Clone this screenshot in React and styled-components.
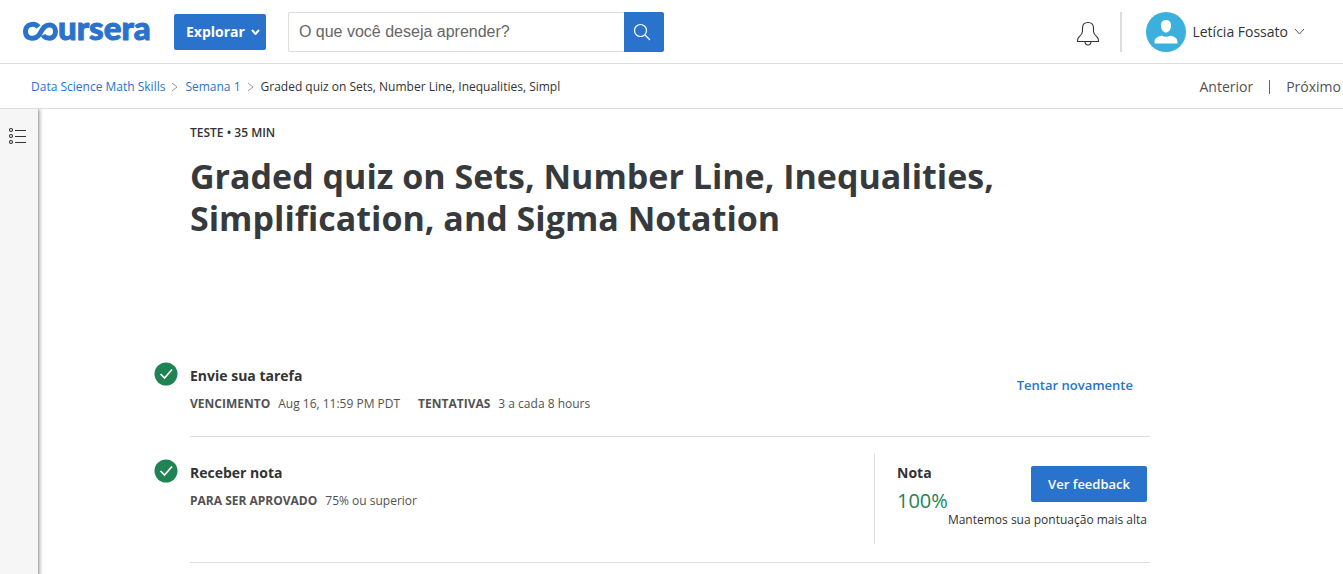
import React from "react";
import styled, { createGlobalStyle } from "styled-components";

const blue = "#2a73cc";
const line = "#dedede";

const GlobalStyle = createGlobalStyle`
  *, *::before, *::after { box-sizing: border-box; }
  html, body { margin: 0; height: 100%; }
  #root { min-height: 100%; display: flex; }
  body {
    background: #fff;
    color: #333;
    font-family: "Open Sans", Arial, sans-serif;
    font-size: 14px;
    line-height: 20px;
  }
  a { text-decoration: none; }
  button { font-family: inherit; cursor: pointer; }
`;

const Page = styled.div`
  flex: 1;
  min-width: 0;
  min-height: 100vh;
  display: flex;
  flex-direction: column;
`;

const Header = styled.header`
  height: 64px;
  display: flex;
  align-items: center;
  padding: 0 38px 0 22px;
  border-bottom: 1px solid ${line};
`;

const LogoLink = styled.a`
  display: flex;
  margin-right: 20px;
`;

const SolidButton = styled.button`
  height: 36px;
  display: flex;
  align-items: center;
  justify-content: center;
  gap: 6px;
  padding: 0 17px;
  border: 0;
  border-radius: 2px;
  background: ${blue};
  color: #fff;
  font-size: 13px;
  font-weight: 600;
  white-space: nowrap;
`;

const ExploreButton = styled(SolidButton)`
  padding: 0 6px 0 12px;
  font-size: 14px;
  font-weight: 700;
`;

const SearchForm = styled.form`
  display: flex;
  flex: 0 1 376px;
  margin-left: 22px;
`;

const SearchInput = styled.input`
  flex: 1;
  min-width: 0;
  height: 40px;
  padding: 0 10px;
  border: 1px solid ${line};
  border-right: 0;
  border-radius: 2px 0 0 2px;
  font-family: "Liberation Sans", Arial, sans-serif;
  font-size: 16px;
  color: #333;
  &::placeholder { color: #666; opacity: 1; }
`;

const SearchButton = styled.button`
  width: 40px;
  height: 40px;
  padding: 0 4px 0 0;
  display: flex;
  align-items: center;
  justify-content: center;
  border: 0;
  border-radius: 0 2px 2px 0;
  background: ${blue};
`;

const Account = styled.div`
  display: flex;
  align-items: center;
  margin-left: auto;
`;

const PlainButton = styled.button`
  display: flex;
  align-items: center;
  gap: 6px;
  padding: 0;
  border: 0;
  background: none;
  color: #333;
  font-size: 14px;
  white-space: nowrap;
`;

const Divider = styled.span`
  width: ${(p) => p.$w}px;
  height: ${(p) => p.$h}px;
  background: ${(p) => p.$color};
  margin: 0 ${(p) => p.$right}px 0 ${(p) => p.$left}px;
`;

const SubBar = styled.nav`
  height: 45px;
  display: flex;
  align-items: center;
  justify-content: space-between;
  padding: 2px 2px 0 31px;
  border-bottom: 1px solid ${line};
`;

const Crumbs = styled.ol`
  display: flex;
  align-items: center;
  gap: 7px;
  margin: 0;
  padding: 0;
  list-style: none;
  font-size: 12px;
  li { display: flex; align-items: center; gap: 6px; }
  a { color: ${blue}; }
`;

const Pager = styled.div`
  display: flex;
  align-items: center;
  a { color: #525252; }
`;

const Body = styled.div`
  flex: 1;
  display: flex;
`;

const Rail = styled.aside`
  width: 38px;
  padding: 18px 8px;
  background: #f6f6f6;
  box-shadow: 1px 0 4px rgba(0, 0, 0, 0.5);
  clip-path: inset(0 -6px 0 0);
`;

const Main = styled.main`
  flex: 1;
  max-width: 1112px;
  padding: 14px 0 0 152px;
`;

const Kicker = styled.p`
  margin: 0;
  font-size: 12px;
  font-weight: 600;
`;

const Title = styled.h1`
  max-width: 860px;
  margin: 12px 0 118px;
  font-size: 34px;
  line-height: 42px;
  font-weight: 700;
  color: #373a3c;
`;

const Step = styled.section`
  display: flex;
  justify-content: space-between;
  min-height: ${(p) => p.$h}px;
  padding-bottom: 18px;
  margin-bottom: 17px;
  border-bottom: 1px solid ${line};
`;

const StepInfo = styled.div`
  display: flex;
  gap: 12px;
  margin-left: -36px;
`;

const StepText = styled.div`
  padding-top: 9px;
`;

const StepTitle = styled.h2`
  margin: 0 0 8px;
  font-size: 14px;
  line-height: 20px;
  font-weight: 700;
`;

const Facts = styled.dl`
  display: flex;
  gap: 18px;
  margin: 0;
  font-size: 12px;
  color: #525252;
  div { display: flex; gap: 8px; }
  dt { font-weight: 700; }
  dd { margin: 0; }
`;

const StepIcon = styled.span`
  padding-top: 5px;
`;

const RetryLink = styled.a`
  margin: 18px 17px 0 0;
  font-size: 13px;
  font-weight: 600;
  color: ${blue};
`;

const GradePanel = styled.div`
  width: 276px;
  height: 90px;
  display: flex;
  flex-wrap: wrap;
  align-content: flex-start;
  justify-content: space-between;
  padding: 9px 3px 0 22px;
  border-left: 1px solid ${line};
`;

const Score = styled.p`
  margin: 0;
  font-size: 20px;
  line-height: 20px;
  color: #1f8354;
`;

const Feedback = styled.div`
  padding-top: 3px;
`;

const Note = styled.p`
  width: 100%;
  margin: 0;
  text-align: right;
  font-size: 12px;
  line-height: 18px;
`;

const Logo = () => (
  <svg width="132" height="48" viewBox="0 -10 132 48" role="img" aria-label="coursera">
    <path
      d="M16.500 9 C13 4.500 3.500 5.500 3.500 13.500 C3.500 21.500 13 22 17 17 C20 13 21 7 27.500 7 C35.500 7 35.500 20.200 27.500 20.200 C24 20.200 22 19 21 17"
      fill="none" stroke={blue} strokeWidth="5"
    />
    <text x="36" y="22" fill={blue} stroke={blue} strokeWidth="1" fontFamily="Lato, sans-serif" fontWeight="900" fontSize="33">ursera</text>
  </svg>
);

const Chevron = ({ w, h, color, stroke, right }) => (
  <svg width={w} height={h} viewBox={`0 0 ${w} ${h}`} aria-hidden="true">
    <path
      d={right ? `M1 1 L${w - 1} ${h / 2} L1 ${h - 1}` : `M1 1 L${w / 2} ${h - 1} L${w - 1} 1`}
      fill="none" stroke={color} strokeWidth={stroke}
    />
  </svg>
);

const SearchIcon = () => (
  <svg width="18" height="18" viewBox="0 0 18 18" fill="none" stroke="#fff" strokeWidth="1.200" aria-hidden="true">
    <circle cx="7.500" cy="7.500" r="6" />
    <path d="M12 12 L17 17" />
  </svg>
);

const Bell = () => (
  <svg width="24" height="28" viewBox="0 0 24 28" fill="none" stroke="#333" strokeWidth="1.100" aria-hidden="true">
    <path d="M12 4.500 C8.500 4.500 6.500 6.500 6.500 10 V13.500 C6.500 16 4.500 17.500 2.500 19.500 Q1.500 20.500 1.500 23.500 H22.500 Q22.500 20.500 21.500 19.500 C19.500 17.500 17.500 16 17.500 13.500 V10 C17.500 6.500 15.500 4.500 12 4.500 Z" />
    <path d="M9 23.500 C9 28.200 15 28.200 15 23.500" />
  </svg>
);

const Avatar = () => (
  <svg width="40" height="40" viewBox="0 0 40 40" aria-hidden="true">
    <circle cx="20" cy="20" r="20" fill="#3bb0dc" />
    <path d="M20 8 C23.500 8 25.500 10.500 25 14.500 C24.600 18 22.500 20.500 20 20.500 C17.500 20.500 15.400 18 15 14.500 C14.500 10.500 16.500 8 20 8 Z" fill="#fff" />
    <path d="M8.500 31.500 C8.500 26 10 25.500 15.500 23.500 Q20 26 24.500 23.500 C30 25.500 31.500 26 31.500 31.500 Z" fill="#fff" />
  </svg>
);

const ListIcon = () => (
  <svg width="18" height="18" viewBox="0 0 18 18" fill="none" stroke="#333" aria-hidden="true">
    {[3, 9, 15].map((y) => (
      <g key={y}>
        <circle cx="3" cy={y} r="1.500" strokeWidth="1.100" />
        <path d={`M7 ${y + 0.5} H18`} />
      </g>
    ))}
  </svg>
);

const Check = () => (
  <svg width="24" height="24" viewBox="0 0 24 24" role="img" aria-label="Concluído">
    <circle cx="12" cy="12" r="11.500" fill="#1f8354" />
    <path d="M6.500 12 L10.500 16 L18 7.500" fill="none" stroke="#fff" strokeWidth="1.700" />
  </svg>
);

const StepDetails = ({ title, facts }) => (
  <StepInfo>
    <StepIcon><Check /></StepIcon>
    <StepText>
      <StepTitle>{title}</StepTitle>
      <Facts>
        {facts.map(([name, value]) => (
          <div key={name}><dt>{name}</dt><dd>{value}</dd></div>
        ))}
      </Facts>
    </StepText>
  </StepInfo>
);

export default function App() {
  return (
    <Page>
      <GlobalStyle />
      <Header>
        <LogoLink href="#"><Logo /></LogoLink>
        <ExploreButton type="button">
          <span>Explorar</span>
          <Chevron w={9} h={6} color="#fff" stroke={2} />
        </ExploreButton>
        <SearchForm role="search">
          <SearchInput type="text" aria-label="Pesquisar" placeholder="O que você deseja aprender?" />
          <SearchButton type="button" aria-label="Buscar"><SearchIcon /></SearchButton>
        </SearchForm>
        <Account>
          <PlainButton type="button" aria-label="Notificações"><Bell /></PlainButton>
          <Divider $w={2} $h={40} $color={line} $left={20} $right={24} />
          <PlainButton type="button">
            <Avatar />
            <span>Letícia Fossato</span>
            <Chevron w={11} h={7} color="#555" stroke={1} />
          </PlainButton>
        </Account>
      </Header>
      <SubBar aria-label="Navegação do curso">
        <Crumbs>
          <li><a href="#">Data Science Math Skills</a><Chevron right w={7} h={10} color="#999" stroke={1} /></li>
          <li><a href="#">Semana 1</a><Chevron right w={7} h={10} color="#999" stroke={1} /></li>
          <li>Graded quiz on Sets, Number Line, Inequalities, Simpl</li>
        </Crumbs>
        <Pager>
          <a href="#">Anterior</a>
          <Divider $w={1} $h={14} $color="#666" $left={16} $right={16} />
          <a href="#">Próximo</a>
        </Pager>
      </SubBar>
      <Body>
        <Rail><PlainButton type="button" aria-label="Abrir menu"><ListIcon /></PlainButton></Rail>
        <Main>
          <Kicker>TESTE • 35 MIN</Kicker>
          <Title>Graded quiz on Sets, Number Line, Inequalities, Simplification, and Sigma Notation</Title>
          <Step $h={80}>
            <StepDetails
              title="Envie sua tarefa"
              facts={[["VENCIMENTO", "Aug 16, 11:59 PM PDT"], ["TENTATIVAS", "3 a cada 8 hours"]]}
            />
            <RetryLink href="#">Tentar novamente</RetryLink>
          </Step>
          <Step $h={109}>
            <StepDetails title="Receber nota" facts={[["PARA SER APROVADO", "75% ou superior"]]} />
            <GradePanel>
              <div>
                <StepTitle as="h3">Nota</StepTitle>
                <Score>100%</Score>
              </div>
              <Feedback><SolidButton type="button">Ver feedback</SolidButton></Feedback>
              <Note>Mantemos sua pontuação mais alta</Note>
            </GradePanel>
          </Step>
        </Main>
      </Body>
    </Page>
  );
}
